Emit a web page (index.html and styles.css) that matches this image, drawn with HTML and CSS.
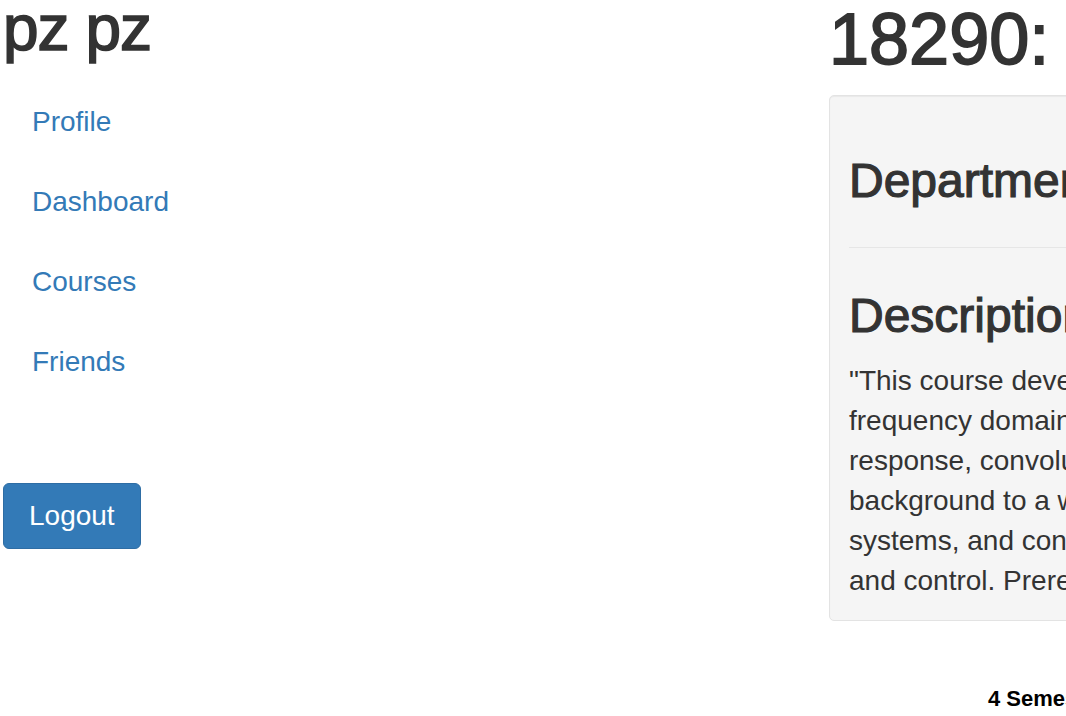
FILE: index.html
```html
<!DOCTYPE html>
<html lang="en">
<head>
<meta charset="utf-8">
<title>18290</title>
<link rel="stylesheet" href="styles.css">
</head>
<body>
<div class="page">
  <aside class="sidebar">
    <h1 class="user-name">pz pz</h1>
    <ul class="nav">
      <li><a href="#">Profile</a></li>
      <li><a href="#">Dashboard</a></li>
      <li><a href="#">Courses</a></li>
      <li><a href="#">Friends</a></li>
    </ul>
    <button class="btn-logout" type="button">Logout</button>
  </aside>
  <main class="course">
    <h1 class="course-title">18290: Signals and Systems</h1>
    <div class="well">
      <h3 class="well-heading first">Department: Electrical and Computer Engineering</h3>
      <hr class="divider">
      <h3 class="well-heading">Description:</h3>
      <p class="description">"This course develops the mathematical foundation and computational tools for processing continuous-time and discrete-time signals in both time and<br>frequency domain. Key concepts and tools introduced and discussed in this class include linear time-invariant systems, impulse response, frequency<br>response, convolution, filtering, sampling, and Fourier transform. Through theoretical analyses and various practical examples, the course provides the necessary<br>background to a wide range of subsequent courses in signal processing, communications, image and video processing, embedded<br>systems, and control, including the basics of modulation and demodulation as well as feedback systems in communication<br>and control. Prerequisites: 18100 and 21122"</p>
    </div>
    <div class="units">4 Semester Units</div>
  </main>
</div>
</body>
</html>
```

FILE: styles.css
```css
html, body {
  margin: 0;
  padding: 0;
  overflow: hidden;
  background: #fff;
}

body {
  font-family: "Liberation Sans", Arial, sans-serif;
  color: #333;
  width: 1066px;
  height: 716px;
}

.page {
  display: flex;
  align-items: flex-start;
  width: 2000px;
}

.sidebar {
  width: 829px;
  flex: 0 0 829px;
  padding-left: 3px;
  box-sizing: border-box;
}

.user-name {
  margin: 0;
  font-size: 64px;
  line-height: 56px;
  font-weight: 500;
  letter-spacing: -1px;
  -webkit-text-stroke: 1.6px #333;
}

.nav {
  list-style: none;
  margin: 26px 0 0;
  padding: 0;
}

.nav li a {
  display: block;
  padding: 20px 29px;
  font-size: 28px;
  line-height: 40px;
  color: #337ab7;
  text-decoration: none;
}

.btn-logout {
  display: block;
  margin-top: 81px;
  padding: 12px 25px;
  font-family: "Liberation Sans", Arial, sans-serif;
  font-size: 28px;
  line-height: 40px;
  color: #fff;
  background: #337ab7;
  border: 1px solid #2e6da4;
  border-radius: 6px;
  cursor: pointer;
}

.course {
  flex: 0 0 1100px;
  width: 1100px;
}

.course-title {
  margin: 0;
  font-size: 72px;
  line-height: 78px;
  font-weight: 500;
  white-space: nowrap;
  -webkit-text-stroke: 1.8px #333;
}

.well {
  margin-top: 17px;
  padding: 19px;
  background: #f5f5f5;
  border: 1px solid #e3e3e3;
  border-radius: 5px;
  box-shadow: inset 0 1px 1px rgba(0, 0, 0, 0.05);
}

.well-heading {
  margin: 41px 0 19px;
  font-size: 48px;
  line-height: 53px;
  font-weight: 500;
  white-space: nowrap;
  -webkit-text-stroke: 1.2px #333;
}

.well-heading.first {
  margin: 39px 0 0;
}

.divider {
  margin: 40px 0 0;
  height: 0;
  border: 0;
  border-top: 1px solid #e6e6e6;
}

.description {
  margin: 0;
  font-size: 28px;
  line-height: 40px;
  white-space: nowrap;
}

.units {
  margin-top: 66px;
  padding-left: 159px;
  font-size: 22px;
  line-height: 24px;
  font-weight: 700;
  color: #000;
  white-space: nowrap;
}
```
